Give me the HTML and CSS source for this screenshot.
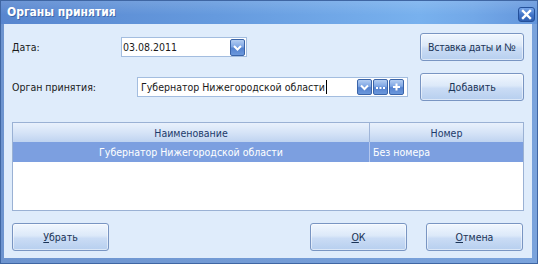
FILE: index.html
```html
<!DOCTYPE html>
<html lang="ru">
<head>
<meta charset="utf-8">
<title>Органы принятия</title>
<link rel="stylesheet" href="styles.css">
</head>
<body>
<div class="window">
  <div class="titlebar">
    <span class="title">Органы принятия</span>
    <span class="close">
      <svg width="17" height="15" viewBox="0 0 17 15"><path d="M5 4 L12 11 M12 4 L5 11" stroke="#fff" stroke-width="2.4" stroke-linecap="square"/></svg>
    </span>
  </div>
  <div class="client">
    <div class="row row-top">
      <span class="lbl lbl-date">Дата:</span>
      <div class="field field-date">
        <span class="val">03.08.2011</span>
        <span class="ebtn ebtn-date"><svg width="15" height="17" viewBox="0 0 15 17"><polyline points="4,7 7.5,10.5 11,7" fill="none" stroke="#fff" stroke-width="2"/></svg></span>
      </div>
      <span class="spacer"></span>
      <button class="btn btn-side btn-insert"><span class="btxt">Вставка даты и <span class="numero">№</span></span></button>
    </div>
    <div class="row row-org">
      <span class="lbl lbl-org">Орган принятия:</span>
      <div class="field field-org">
        <span class="val">Губернатор Нижегородской области</span><span class="caret"></span>
        <span class="spacer"></span>
        <span class="ebtn"><svg width="15" height="16" viewBox="0 0 15 16"><polyline points="4,6.5 7.5,10 11,6.5" fill="none" stroke="#fff" stroke-width="2"/></svg></span>
        <span class="ebtn"><svg width="15" height="16" viewBox="0 0 15 16"><rect x="3" y="8" width="2" height="2" fill="#fff"/><rect x="6.5" y="8" width="2" height="2" fill="#fff"/><rect x="10" y="8" width="2" height="2" fill="#fff"/></svg></span>
        <span class="ebtn"><svg width="15" height="16" viewBox="0 0 15 16"><path d="M7.5 4.5 V11.5 M4 8 H11" stroke="#fff" stroke-width="2"/></svg></span>
      </div>
      <span class="spacer"></span>
      <button class="btn btn-side"><u>Д</u>обавить</button>
    </div>
    <div class="grid">
      <div class="ghead">
        <div class="c1">Наименование</div>
        <div class="c2">Номер</div>
      </div>
      <div class="grow sel">
        <div class="c1">Губернатор Нижегородской области</div>
        <div class="c2 left">Без номера</div>
      </div>
    </div>
    <div class="row row-bottom">
      <button class="btn btn-foot"><u>У</u>брать</button>
      <span class="spacer"></span>
      <button class="btn btn-foot"><u>О</u>К</button>
      <button class="btn btn-foot btn-cancel"><u>О</u>тмена</button>
    </div>
  </div>
</div>
</body>
</html>
```

FILE: styles.css
```css
html, body {
  margin: 0;
  padding: 0;
}
body {
  width: 538px;
  height: 264px;
  overflow: hidden;
  background: #6f95cc;
  font-family: "DejaVu Sans Condensed", "DejaVu Sans", sans-serif;
  font-size: 10.5px;
  color: #1a1a1a;
}
.window {
  box-sizing: border-box;
  width: 538px;
  height: 264px;
  border: 1px solid #3f66a3;
  background: linear-gradient(to right, #6d94cf, #7aa3dc);
  display: flex;
  flex-direction: column;
}
.titlebar {
  height: 23px;
  flex: none;
  display: flex;
  align-items: center;
  background:
    linear-gradient(to bottom, rgba(255,255,255,0.12), rgba(255,255,255,0) 60%),
    linear-gradient(to right, #5886cf 0%, #659ade 40%, #78b1ee 78%, #72a8e8 88%, #6496dc 100%);
  padding-left: 6px;
  padding-right: 2px;
}
.title {
  flex: 1;
  color: #fff;
  font-weight: bold;
  font-size: 12px;
  text-shadow: 1px 1px 0 rgba(30,60,120,0.45);
  padding-bottom: 1px;
}
.close {
  width: 17px;
  height: 15px;
  margin-top: 3px;
  border: 1px solid #24509a;
  border-radius: 3px;
  background: linear-gradient(to bottom, #77a6ea, #3f72c6 55%, #2f5fb2);
  box-sizing: border-box;
  display: flex;
  align-items: center;
  justify-content: center;
}
.close svg { display: block; margin: -1px; }
.client {
  box-sizing: border-box;
  height: 234px;
  margin: 0 5px 0 3px;
  background: #dfecfb;
  padding: 0 8px;
  display: flex;
  flex-direction: column;
}
.row {
  display: flex;
  align-items: center;
  height: 28px;
  flex: none;
}
.row-top { margin-top: 9px; }
.row-org { margin-top: 12px; }
.row-bottom { margin-top: 12px; }
.spacer { flex: 1; }
.lbl { flex: none; }
.lbl-date { width: 109px; }
.lbl-org { width: 125px; }
.field {
  box-sizing: border-box;
  height: 20px;
  border: 1px solid #a3bddf;
  background: #fff;
  display: flex;
  align-items: center;
  flex: none;
}
.field-date { width: 126px; padding-left: 1px; padding-right: 1px; }
.field-date .val { flex: 1; }
.field-org { width: 271px; padding-left: 3px; padding-right: 3px; }
.val { white-space: nowrap; }
.caret {
  width: 1px;
  height: 14px;
  background: #000;
  margin-left: 1px;
}
.ebtn {
  box-sizing: border-box;
  width: 15px;
  height: 16px;
  margin-left: 1px;
  border: 1px solid #3a64a8;
  border-radius: 2px;
  background: linear-gradient(to bottom, #b3cdf2 0%, #7ea6e4 45%, #5482cf 55%, #6b98dc 100%);
  display: flex;
  align-items: center;
  justify-content: center;
}
.ebtn-date { height: 17px; }
.ebtn svg { display: block; margin: -1px; flex: none; }
.btn {
  box-sizing: border-box;
  height: 28px;
  border: 1px solid #7995c2;
  border-radius: 3px;
  background: linear-gradient(to bottom, #f1f7fe 0%, #dce9f9 45%, #cadcf5 55%, #b7cfef 100%);
  box-shadow: inset 0 0 0 1px rgba(255,255,255,0.5);
  font-family: inherit;
  font-size: 10.5px;
  color: #1b3457;
  padding: 0;
  flex: none;
}
.btn u { text-underline-offset: 1px; }
.btn-side { width: 104px; }
.btn-insert {
  display: flex;
  align-items: center;
  justify-content: center;
  overflow: visible;
}
.btxt { white-space: nowrap; letter-spacing: -0.3px; }
.numero { font-family: "Liberation Sans", sans-serif; font-size: 11px; letter-spacing: 0; }
.btn-foot { width: 97px; }
.btn-cancel { margin-left: 19px; margin-right: 1px; }
.grid {
  box-sizing: border-box;
  margin-top: 21px;
  height: 89px;
  flex: none;
  border: 1px solid #9ab1d4;
  background: #fff;
}
.ghead, .grow {
  display: grid;
  grid-template-columns: 357px 1fr;
}
.ghead {
  height: 19px;
  background: linear-gradient(to bottom, #e9f1fc 0%, #d6e4f7 50%, #bfd3f0 100%);
  color: #1d3a6b;
}
.ghead .c1 { border-right: 1px solid #9fb5d8; }
.grow {
  height: 20px;
}
.sel {
  background: #7c9fe0;
  color: #fff;
}
.sel .c1 { border-right: 1px solid #b4c7ee; }
.c1, .c2 {
  display: flex;
  align-items: center;
  justify-content: center;
  white-space: nowrap;
}
.c2.left { justify-content: flex-start; padding-left: 3px; }
```
